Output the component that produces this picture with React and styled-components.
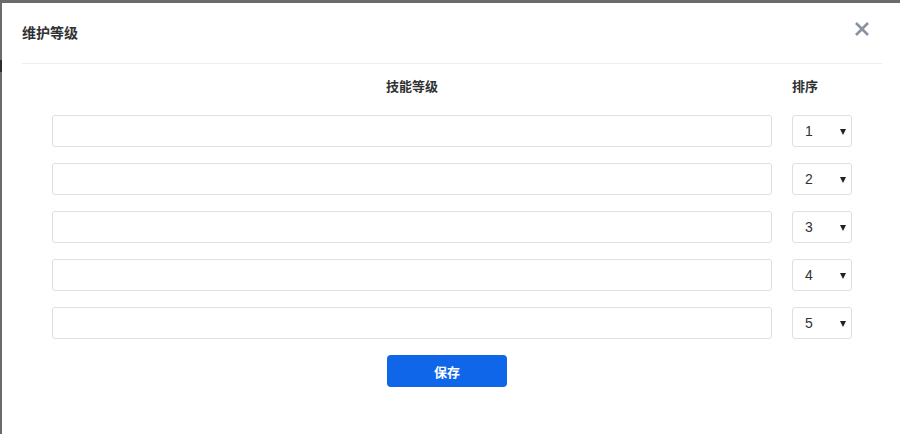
import React, { useState } from 'react'
import styled, { createGlobalStyle } from 'styled-components'

const Global = createGlobalStyle`
  html, body {
    margin: 0;
    padding: 0;
    height: 100%;
    background: #6b6b6b;
    font-family: "Liberation Sans", "Noto Sans CJK SC", sans-serif;
  }
  #root { height: 100%; }
`

const Page = styled.div`
  height: 434px;
  padding: 3px 0 0 2px;
  box-sizing: border-box;
  position: relative;
`

const Modal = styled.div`
  background: #fff;
  height: 100%;
  padding: 0 18px 0 20px;
  box-sizing: border-box;
`

const Header = styled.div`
  height: 61px;
  display: flex;
  align-items: center;
  justify-content: space-between;
  border-bottom: 1px solid #ebeef5;
  box-sizing: border-box;
`

const Title = styled.h3`
  margin: 0;
  font-size: 14px;
  font-weight: 700;
  color: #303133;
  padding-bottom: 2px;
`

const Close = styled.button`
  border: 0;
  background: none;
  padding: 0;
  margin-right: 12px;
  margin-bottom: 9px;
  width: 16px;
  height: 16px;
  cursor: pointer;
  display: flex;
`

const Body = styled.div`
  padding: 14px 30px 0;
`

const Grid = styled.div`
  display: grid;
  grid-template-columns: 720px 60px;
  column-gap: 20px;
  row-gap: 16px;
`

const ColHead = styled.div`
  font-size: 13px;
  font-weight: 700;
  color: #303133;
  text-align: ${p => p.$align || 'center'};
  line-height: 18px;
  margin-bottom: 3px;
`

const Input = styled.input`
  height: 32px;
  border: 1px solid #dcdfe6;
  border-radius: 3px;
  box-sizing: border-box;
  padding: 0 10px;
  font-size: 13px;
  outline: none;
`

const SelectWrap = styled.div`
  position: relative;
  &:after {
    content: "";
    position: absolute;
    right: 6px;
    top: 14px;
    border-left: 3.5px solid transparent;
    border-right: 3.5px solid transparent;
    border-top: 6px solid #222;
    pointer-events: none;
  }
`

const Select = styled.select`
  appearance: none;
  width: 60px;
  height: 32px;
  border: 1px solid #dcdfe6;
  border-radius: 3px;
  background: #fff;
  box-sizing: border-box;
  padding: 0 0 0 12px;
  font-family: "Liberation Sans", sans-serif;
  font-size: 14px;
  color: #333;
  outline: none;
`

const Footer = styled.div`
  display: flex;
  justify-content: center;
  margin-top: 16px;
`

const SaveButton = styled.button`
  width: 120px;
  height: 32px;
  margin-right: 10px;
  border: 0;
  border-radius: 4px;
  background: #0f66e9;
  color: #fff;
  font-family: "Liberation Sans", "Noto Sans CJK SC", sans-serif;
  font-size: 13px;
  font-weight: 700;
  cursor: pointer;
`

const EdgeMark = styled.div`
  position: absolute;
  left: 0;
  top: 60px;
  width: 2px;
  height: 12px;
  background: #2a2f36;
`

export default function App() {
  const [levels, setLevels] = useState(['', '', '', '', ''])

  return (
    <Page>
      <Global />
      <EdgeMark />
      <Modal>
        <Header>
          <Title>维护等级</Title>
          <Close aria-label="close">
            <svg width="16" height="16" viewBox="0 0 16 16">
              <path d="M2 2 L14 14 M14 2 L2 14" stroke="#8c91a1" strokeWidth="2.6" strokeLinecap="butt" />
            </svg>
          </Close>
        </Header>
        <Body>
          <Grid>
            <ColHead>技能等级</ColHead>
            <ColHead $align="left">排序</ColHead>
            {levels.map((v, i) => (
              <React.Fragment key={i}>
                <Input
                  value={v}
                  onChange={e => {
                    const next = [...levels]
                    next[i] = e.target.value
                    setLevels(next)
                  }}
                />
                <SelectWrap>
                  <Select defaultValue={i + 1}>
                    {[1, 2, 3, 4, 5].map(n => (
                      <option key={n} value={n}>{n}</option>
                    ))}
                  </Select>
                </SelectWrap>
              </React.Fragment>
            ))}
          </Grid>
          <Footer>
            <SaveButton>保存</SaveButton>
          </Footer>
        </Body>
      </Modal>
    </Page>
  )
}
